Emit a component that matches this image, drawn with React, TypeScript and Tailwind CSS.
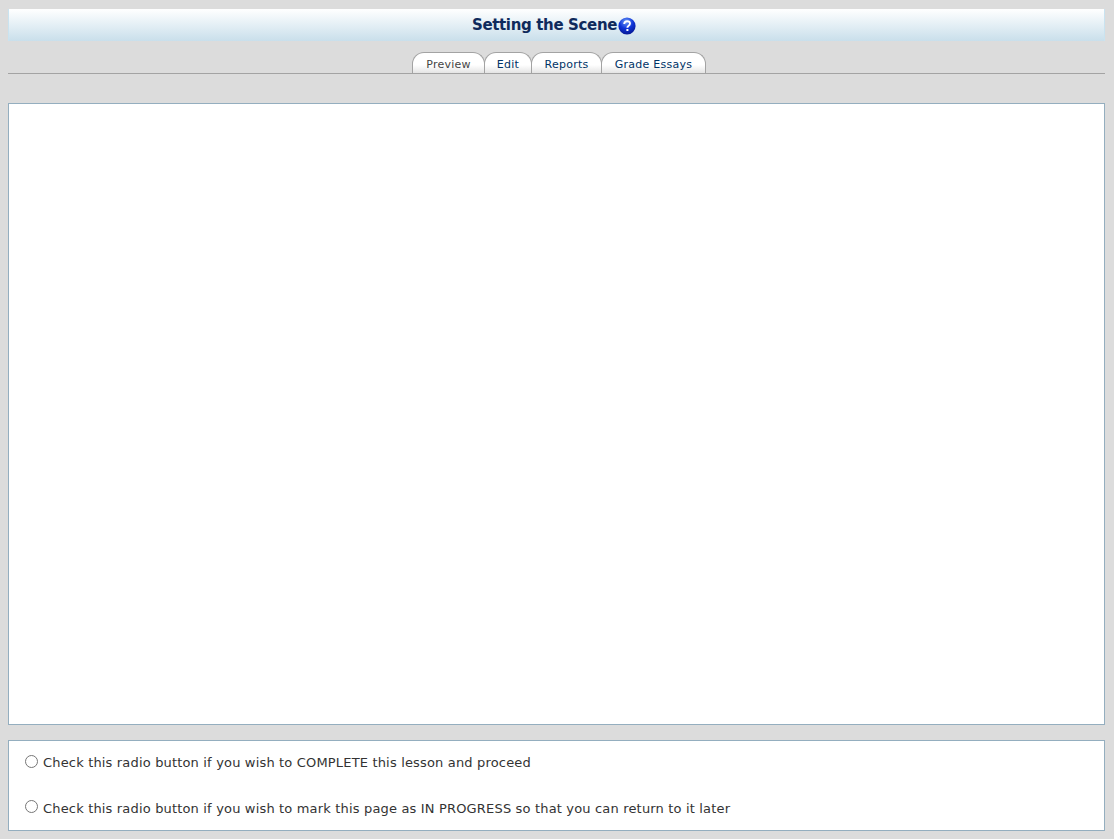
const tabs = [
  { label: "Preview", width: "w-[73px]", color: "text-[#444444]" },
  { label: "Edit", width: "w-[48px]", color: "text-[#003366]" },
  { label: "Reports", width: "w-[71px]", color: "text-[#003366]" },
  { label: "Grade Essays", width: "w-[105px]", color: "text-[#003366]" },
]

function HelpIcon() {
  return (
    <svg width="18" height="18" viewBox="0 0 18 18" className="shrink-0 mt-[2px] ml-px">
      <defs>
        <radialGradient id="help" cx="45%" cy="25%" r="80%">
          <stop offset="0%" stopColor="#6d9cf8" />
          <stop offset="50%" stopColor="#0f35d8" />
          <stop offset="100%" stopColor="#03128a" />
        </radialGradient>
      </defs>
      <circle cx="9" cy="9" r="8.6" fill="url(#help)" />
      <path d="M6.2 7c0-1.8 1.2-2.8 2.9-2.8s2.9 1 2.9 2.4c0 1.2-.7 1.8-1.6 2.4-.7.5-1 .9-1 1.7" fill="none" stroke="#fff" strokeWidth="1.9" />
      <rect x="8.4" y="12" width="2" height="2" fill="#fff" />
    </svg>
  )
}

function RadioRow({ text, offset }: { text: string; offset: string }) {
  return (
    <label className="flex items-center h-[46px] pl-4">
      <span className={`w-[13px] h-[13px] rounded-full border border-[#767676] bg-white shrink-0 ${offset}`} />
      <span className="ml-[5px] -mt-[2px] text-[13px] tracking-[0.17px] text-[#333333]">{text}</span>
    </label>
  )
}

export default function App() {
  return (
    <div className="min-h-[839px] bg-[#dcdcdc] pt-[9px] pl-2 pr-[9px] font-['DejaVu_Sans',Verdana,sans-serif]">
      <div className="h-[32px] flex items-center justify-center pr-[5px] border-x border-[#c9e3f0] bg-gradient-to-b from-white to-[#c9dfeb]">
        <h1 className="text-[15px] tracking-[-0.35px] font-bold text-[#0f2a5c]">Setting the Scene</h1>
        <HelpIcon />
      </div>

      <div className="mt-[11px] h-[22px] flex justify-center pl-[4px] border-b border-[#a3a3a3]">
        {tabs.map((tab) => (
          <div
            key={tab.label}
            className={`${tab.width} h-[21px] -mr-px pt-[4px] flex items-center justify-center rounded-t-[12px] border border-b-0 border-[#a3a3a3] bg-gradient-to-b from-white from-60% to-[#e4e4e4] text-[11px] tracking-[0.25px] ${tab.color}`}
          >
            {tab.label}
          </div>
        ))}
      </div>

      <div className="mt-[29px] h-[622px] border border-[#94aebf] bg-white" />

      <div className="mt-[15px] h-[91px] border border-[#94aebf] bg-white">
        <RadioRow text="Check this radio button if you wish to COMPLETE this lesson and proceed" offset="-mt-[5px]" />
        <RadioRow text="Check this radio button if you wish to mark this page as IN PROGRESS so that you can return to it later" offset="-mt-[7px]" />
      </div>
    </div>
  )
}
